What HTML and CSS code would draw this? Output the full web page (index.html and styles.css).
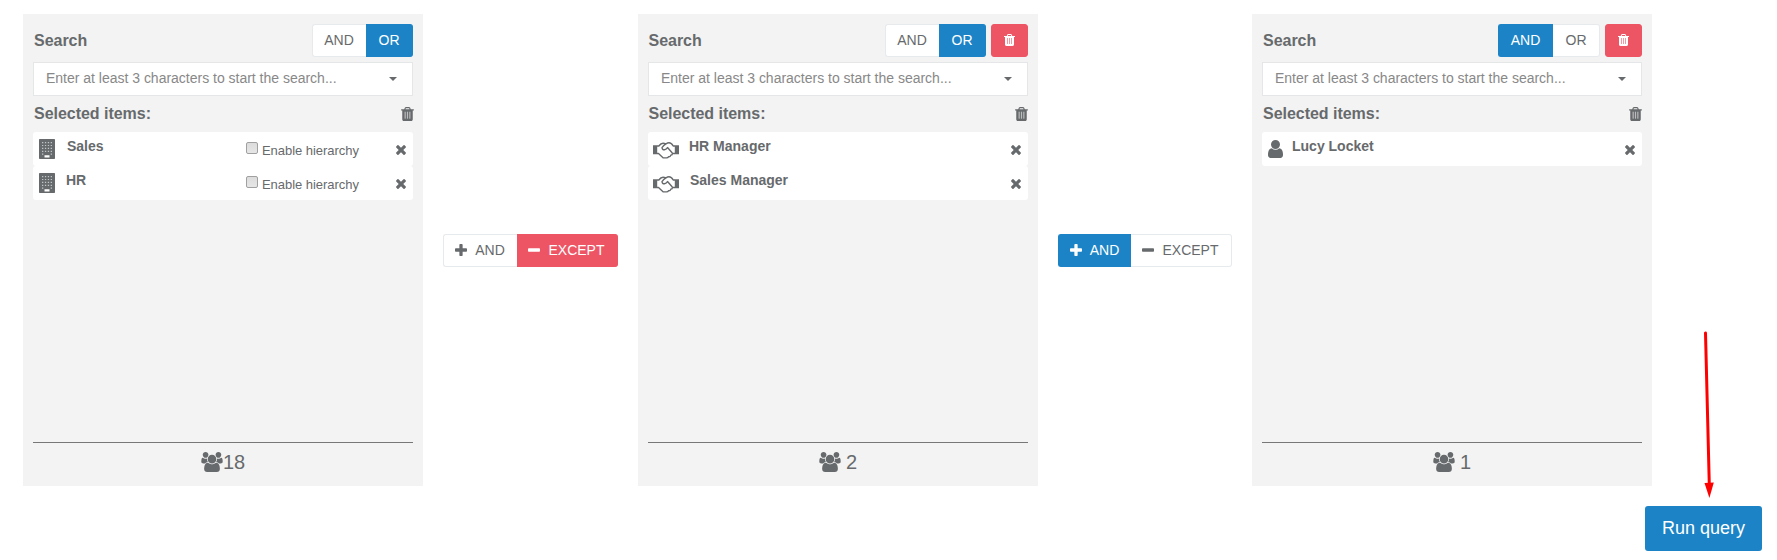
FILE: index.html
```html
<!DOCTYPE html>
<html lang="en">
<head>
<meta charset="utf-8">
<title>Query builder</title>
<link rel="stylesheet" href="styles.css">
</head>
<body>
<svg class="sprite" aria-hidden="true">
  <symbol id="trash" viewBox="192 128 1408 1536"><path class="shade" d="M500 600h800v860h-800z"/><path d="M704 1376v-704q0-14-9-23t-23-9h-64q-14 0-23 9t-9 23v704q0 14 9 23t23 9h64q14 0 23-9t9-23zm256 0v-704q0-14-9-23t-23-9h-64q-14 0-23 9t-9 23v704q0 14 9 23t23 9h64q14 0 23-9t9-23zm256 0v-704q0-14-9-23t-23-9h-64q-14 0-23 9t-9 23v704q0 14 9 23t23 9h64q14 0 23-9t9-23zm-544-992h448l-48-117q-7-9-17-11h-317q-10 2-17 11zm928 32v64q0 14-9 23t-23 9h-96v948q0 83-47 143.500t-113 60.500h-832q-66 0-113-58.500t-47-141.500v-952h-96q-14 0-23-9t-9-23v-64q0-14 9-23t23-9h309l70-167q15-37 54-63t79-26h320q40 0 79 26t54 63l70 167h309q14 0 23 9t9 23z"/></symbol>
  <symbol id="users" viewBox="64 0 1920 1792"><path d="M657 896q-162 5-265 128h-134q-82 0-138-40.500t-56-118.500q0-353 124-353 6 0 43.500 21t97.500 42.500 119 21.500q67 0 133-23-5 37-5 66 0 139 81 256zm1071 637q0 120-73 189.500t-194 69.500h-874q-121 0-194-69.500t-73-189.500q0-53 3.500-103.500t14-109 26.500-108.500 43-97.500 62-81 85.500-53.500 111.500-20q10 0 43 21.500t73 48 107 48 135 21.500 135-21.500 107-48 73-48 43-21.500q61 0 111.500 20t85.500 53.500 62 81 43 97.500 26.500 108.500 14 109 3.500 103.500zm-1024-1277q0 106-75 181t-181 75-181-75-75-181 75-181 181-75 181 75 75 181zm704 384q0 159-112.500 271.500t-271.500 112.500-271.500-112.500-112.500-271.500 112.500-271.500 271.500-112.500 271.500 112.500 112.500 271.500zm576 225q0 78-56 118.500t-138 40.500h-134q-103-123-265-128 81-117 81-256 0-29-5-66 66 23 133 23 59 0 119-21.500t97.500-42.500 43.500-21q124 0 124 353zm-128-609q0 106-75 181t-181 75-181-75-75-181 75-181 181-75 181 75 75 181z"/></symbol>
  <symbol id="times" viewBox="302 366 1188 1188"><path d="M1490 1322q0 40-28 68l-136 136q-28 28-68 28t-68-28l-294-294-294 294q-28 28-68 28t-68-28l-136-136q-28-28-28-68t28-68l294-294-294-294q-28-28-28-68t28-68l136-136q28-28 68-28t68 28l294 294 294-294q28-28 68-28t68 28l136 136q28 28 28 68t-28 68l-294 294 294 294q28 28 28 68z"/></symbol>
  <symbol id="plus" viewBox="192 128 1408 1408"><path d="M1600 736v192q0 40-28 68t-68 28h-416v416q0 40-28 68t-68 28h-192q-40 0-68-28t-28-68v-416h-416q-40 0-68-28t-28-68v-192q0-40 28-68t68-28h416v-416q0-40 28-68t68-28h192q40 0 68 28t28 68v416h416q40 0 68 28t28 68z"/></symbol>
  <symbol id="minus" viewBox="192 128 1408 1408"><path d="M1600 736v192q0 40-28 68t-68 28h-1216q-40 0-68-28t-28-68v-192q0-40 28-68t68-28h1216q40 0 68 28t28 68z"/></symbol>
  <symbol id="user" viewBox="256 128 1280 1536"><path d="M1536 1399q0 109-62.500 187t-150.500 78h-854q-88 0-150.500-78t-62.500-187q0-85 8.500-160.500t31.500-152 58.500-131 94-89 134.500-34.500q131 128 313 128t313-128q76 0 134.500 34.500t94 89 58.500 131 31.500 152 8.500 160.500zm-256-887q0 159-112.500 271.500t-271.500 112.500-271.500-112.500-112.500-271.500 112.500-271.500 271.500-112.500 271.500 112.500 112.500 271.500z"/></symbol>
  <symbol id="building" viewBox="0 0 16 20"><path class="shade" d="M2 2h12v14h-12z"/><path fill-rule="evenodd" d="M.7 0h14.600q.7 0 .7.700v18.600q0 .7-.7.700H.7q-.7 0-.7-.7V.7Q0 0 .7 0zM3 3v1.200h1.300V3zm2.900 0v1.200h1.300V3zm2.900 0v1.200h1.300V3zm2.900 0v1.200H13V3zM3 5.900v1.200h1.300V5.900zm2.900 0v1.200h1.300V5.900zm2.900 0v1.200h1.300V5.900zm2.900 0v1.200H13V5.900zM3 8.800V10h1.300V8.800zm2.900 0V10h1.300V8.800zm2.900 0V10h1.300V8.800zm2.900 0V10H13V8.800zM3 11.700v1.200h1.300v-1.200zm2.900 0v1.200h1.300v-1.200zm2.900 0v1.200h1.300v-1.200zm2.900 0v1.200H13v-1.200zM3 14.600v1.200h1.300v-1.200zm8.700 0v1.200H13v-1.200zM5.500 16.300v2.200h5v-2.200z"/></symbol>
  <symbol id="handshake" viewBox="0 0 26 17"><path d="M0 3.300h4.200v9H0zM21.800 3.300H26v9h-4.200z"/><path class="line" d="M4 4h1.800q2-2.800 4.200-2.800 1.500 0 3 .6 1.500-1 3-1 2.500 0 4.200 3.200H22M4 11.500h1.500l4.800 4.400h3.200q1.500 0 2-1.200 1.800.2 2.200-1.400 1.800-.1 1.800-1.800H22M13 1.800Q10.500 3.200 9 5.700 9.300 8 11.500 7.700q2-.3 3-2.200l4.800 5.500"/></symbol>
</svg>
<main class="builder">
  <section class="panel">
    <header class="panel-head"><h2 class="title">Search</h2>
      <div class="group"><button class="btn first and">AND</button><button class="btn last or primary">OR</button></div></header>
    <div class="select"><span>Enter at least 3 characters to start the search...</span><i class="caret"></i></div>
    <div class="selected"><h2 class="title">Selected items:</h2><svg class="clear edge"><use href="#trash"/></svg></div>
    <ul class="items">
      <li class="item"><svg class="building"><use href="#building"/></svg><b class="name">Sales</b><label class="hier"><i class="box"></i>Enable hierarchy</label><svg class="times"><use href="#times"/></svg></li>
      <li class="item"><svg class="building"><use href="#building"/></svg><b class="name near">HR</b><label class="hier"><i class="box"></i>Enable hierarchy</label><svg class="times"><use href="#times"/></svg></li>
    </ul>
    <footer class="count tight"><svg class="users"><use href="#users"/></svg><span>18</span></footer>
  </section>
  <div class="joiner"><div class="group"><button class="btn first join-and"><svg class="sign"><use href="#plus"/></svg>AND</button><button class="btn last join-except danger"><svg class="sign"><use href="#minus"/></svg>EXCEPT</button></div></div>
  <section class="panel">
    <header class="panel-head"><h2 class="title flush">Search</h2>
      <div class="group"><button class="btn first and">AND</button><button class="btn last or primary">OR</button></div><button class="btn remove danger"><svg class="bin"><use href="#trash"/></svg></button></header>
    <div class="select"><span>Enter at least 3 characters to start the search...</span><i class="caret"></i></div>
    <div class="selected"><h2 class="title flush">Selected items:</h2><svg class="clear"><use href="#trash"/></svg></div>
    <ul class="items">
      <li class="item"><svg class="handshake"><use href="#handshake"/></svg><b class="name">HR Manager</b><svg class="times"><use href="#times"/></svg></li>
      <li class="item"><svg class="handshake"><use href="#handshake"/></svg><b class="name far">Sales Manager</b><svg class="times"><use href="#times"/></svg></li>
    </ul>
    <footer class="count"><svg class="users"><use href="#users"/></svg><span>2</span></footer>
  </section>
  <div class="joiner second"><div class="group"><button class="btn first join-and primary"><svg class="sign"><use href="#plus"/></svg>AND</button><button class="btn last join-except"><svg class="sign"><use href="#minus"/></svg>EXCEPT</button></div></div>
  <section class="panel">
    <header class="panel-head"><h2 class="title">Search</h2>
      <div class="group"><button class="btn first and wide primary">AND</button><button class="btn last or">OR</button></div><button class="btn remove danger"><svg class="bin"><use href="#trash"/></svg></button></header>
    <div class="select"><span>Enter at least 3 characters to start the search...</span><i class="caret"></i></div>
    <div class="selected"><h2 class="title">Selected items:</h2><svg class="clear"><use href="#trash"/></svg></div>
    <ul class="items">
      <li class="item"><svg class="user"><use href="#user"/></svg><b class="name">Lucy Locket</b><svg class="times"><use href="#times"/></svg></li>
    </ul>
    <footer class="count"><svg class="users"><use href="#users"/></svg><span>1</span></footer>
  </section>
</main>
<div class="actions"><button class="run">Run query</button></div>
<svg class="arrow" viewBox="0 0 20 170"><path class="shaft" d="M6.500 3 10.300 155"/><path d="M5.500 153 14.800 152.500 10.400 168z"/></svg>
</body>
</html>
```
FILE: styles.css
```css
* { box-sizing: border-box; }
body { margin: 0; width: 1777px; height: 560px; overflow: hidden; background: #fff; color: #676a6c; font-family: "Liberation Sans", Arial, sans-serif; font-size: 14px; }
svg { display: block; flex: none; fill: currentColor; }
.sprite { position: absolute; width: 0; height: 0; }
.shade { opacity: .4; }
.line { fill: none; stroke: currentColor; stroke-width: 1.4; stroke-linejoin: round; }
.builder { display: flex; padding: 14px 0 0 23px; }
.panel { display: flex; flex-direction: column; width: 400px; height: 472px; padding: 10px; background: #f3f3f3; }
.panel-head { display: flex; height: 33px; align-items: center; }
.title { flex: 1; margin: 0 0 0 1px; font-size: 16px; line-height: 20px; font-weight: bold; letter-spacing: -0.03px; }
.title.flush { margin-left: 0.5px; }
.group { display: flex; }
.btn { display: flex; align-items: center; justify-content: center; height: 33px; margin: 0; padding: 0 1px 2px 0; border: 1px solid #e7eaec; border-radius: 3px; background: #fff; color: inherit; font: 14px "Liberation Sans", Arial, sans-serif; }
.first { border-radius: 3px 0 0 3px; border-right: 0; }
.last { border-radius: 0 3px 3px 0; border-left: 0; }
.and { width: 54px; }
.and.wide { width: 55px; }
.or { width: 47px; padding-left: 1px; }
.primary { background: #1c84c6; border-color: #1c84c6; color: #fff; }
.danger { background: #ed5565; border-color: #ed5565; color: #fff; }
.remove { width: 37px; margin-left: 5px; }
.bin { width: 11px; height: 12px; margin-top: 1px; }
.select { display: flex; align-items: center; justify-content: space-between; height: 34px; margin-top: 5px; padding: 0 15px 2px 12px; border: 1px solid #e5e6e7; background: #fff; color: #888; letter-spacing: -0.01px; }
.caret { width: 8px; height: 4px; margin-top: 2px; background: #676a6c; clip-path: polygon(0 0, 100% 0, 50% 100%); }
.selected { display: flex; align-items: center; height: 36px; padding-bottom: 1px; }
.clear { width: 13px; height: 14px; margin-top: 1px; }
.clear.edge { margin-right: -1px; }
.items { margin: 0; padding: 0; list-style: none; }
.item { display: flex; align-items: center; height: 34px; padding: 0 7px 0 6px; background: #fff; border-radius: 3px; }
.name { flex: 1; margin: 0 0 7px 12px; font-size: 14px; line-height: 18px; }
.building { width: 16px; height: 20px; }
.near { margin-left: 11px; }
.handshake { width: 26px; height: 17px; margin-left: -1px; margin-top: 2px; }
.handshake + .name { margin-left: 10px; }
.handshake + .far { margin-left: 11px; }
.user { width: 15px; height: 18px; }
.user + .name { margin-left: 9px; }
.hier { display: flex; align-items: center; margin-right: 37px; padding-top: 3px; font-size: 13px; letter-spacing: -0.03px; }
.box { width: 12px; height: 12px; margin: -5px 4px 0 0; border: 1px solid #a0a0a0; border-radius: 2px; background: linear-gradient(#dcdcdc, #e6e6e6); }
.times { width: 10px; height: 10px; margin-top: 2px; }
.count { display: flex; align-items: center; justify-content: center; gap: 5px; height: 44px; margin-top: auto; margin-bottom: -10px; padding-bottom: 6px; border-top: 1px solid #777; font-size: 20px; }
.count span { padding-top: 1px; }
.count.tight { gap: 0; }
.users { width: 22px; height: 20px; }
.joiner { width: 215px; padding: 220px 0 0 20px; }
.joiner.second { width: 214px; }
.join-and { width: 74px; gap: 8px; }
.join-except { width: 101px; gap: 8px; }
.join-and.primary { width: 73px; }
.sign { width: 12px; height: 12px; }
.actions { display: flex; justify-content: flex-end; padding: 20px 15px 0 0; }
.run { width: 117px; height: 45px; padding: 0; border: 0; border-radius: 3px; background: #1c84c6; color: #fff; font: 18px "Liberation Sans", Arial, sans-serif; }
.arrow { position: absolute; left: 1699px; top: 330px; width: 20px; height: 170px; fill: red; }
.shaft { fill: none; stroke: red; stroke-width: 3; stroke-linecap: round; }
```
